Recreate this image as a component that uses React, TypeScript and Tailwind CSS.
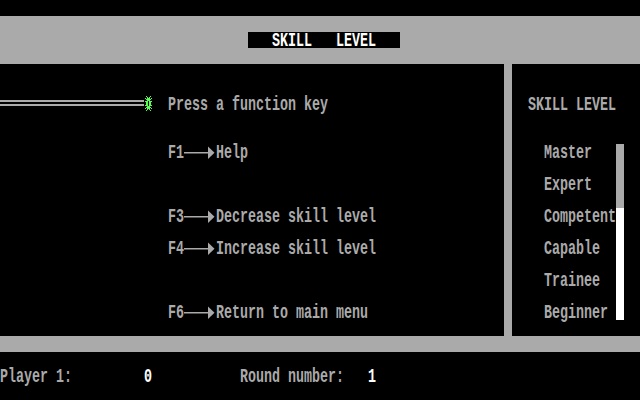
import React from "react";

const mono = "font-['Liberation_Mono',monospace] font-bold text-[13.333px] leading-4";

// Tall DOS-style glyphs: 8px cells stretched vertically to fill a 16px row.
function T({ children, className = "" }: { children: React.ReactNode; className?: string }) {
  return (
    <span className={`inline-block whitespace-pre origin-center scale-y-[1.5] translate-y-[1px] ${className}`}>
      {children}
    </span>
  );
}

function Row({ children, className = "" }: { children: React.ReactNode; className?: string }) {
  return <div className={`h-4 flex items-center ${mono} ${className}`}>{children}</div>;
}

function Arrow() {
  return (
    <svg width="32" height="16" viewBox="0 0 32 16" className="shrink-0">
      <rect x="0" y="8" width="26" height="1.5" fill="#aaaaaa" />
      <polygon points="24,2.5 30.5,8.75 24,15" fill="#aaaaaa" />
    </svg>
  );
}

function Bug() {
  // 7x15 pixel sprite
  const rows = [
    ".X...X.",
    "..X.X..",
    "X.XXX.X",
    ".XXXXX.",
    "..XXX..",
    "XXX.XXX",
    ".XX.XX.",
    ".XX.XX.",
    ".XX.XX.",
    "XXX.XXX",
    "..XXX..",
    ".XXXXX.",
    "X.XXX.X",
    "..X.X..",
    ".X...X.",
  ];
  return (
    <svg width="8" height="16" viewBox="0 0 8 16" className="shrink-0" shapeRendering="crispEdges">
      {rows.map((r, y) =>
        r.split("").map((c, x) =>
          c === "X" ? <rect key={`${x}-${y}`} x={x + 1} y={y} width="1" height="1" fill="#55ff55" /> : null
        )
      )}
    </svg>
  );
}

function KeyLine({ k, label }: { k: string; label: string }) {
  return (
    <Row className="text-[#aaaaaa]">
      <T>{k}</T>
      <Arrow />
      <T>{label}</T>
    </Row>
  );
}

const levels = ["Master", "Expert", "Competent", "Capable", "Trainee", "Beginner"];

export default function App() {
  return (
    <div className="w-[640px] h-[400px] bg-black flex flex-col overflow-hidden">
      <div className="h-4 bg-black" />
      <div className="h-12 bg-[#aaaaaa] flex items-center pl-[248px]">
        <div className={`w-[152px] h-4 bg-black flex items-center pl-6 text-white ${mono}`}>
          <T>{"SKILL   LEVEL"}</T>
        </div>
      </div>

      <div className="h-[272px] flex">
        {/* menu panel */}
        <div className="w-[504px] bg-black pt-8 flex flex-col">
          <Row className="text-[#aaaaaa]">
            <div className="w-[144px] h-4 flex flex-col justify-start pt-1 gap-[2px]">
              <div className="h-[2px] bg-[#aaaaaa]" />
              <div className="h-[2px] bg-[#aaaaaa]" />
            </div>
            <Bug />
            <div className="w-4" />
            <T>Press a function key</T>
          </Row>
          <div className="pl-[168px] flex flex-col">
            <div className="mt-8">
              <KeyLine k="F1" label="Help" />
            </div>
            <div className="mt-12">
              <KeyLine k="F3" label="Decrease skill level" />
            </div>
            <div className="mt-4">
              <KeyLine k="F4" label="Increase skill level" />
            </div>
            <div className="mt-12">
              <KeyLine k="F6" label="Return to main menu" />
            </div>
          </div>
        </div>

        <div className="w-2 bg-[#aaaaaa]" />

        {/* level panel */}
        <div className="flex-1 bg-black pt-8 pl-4 flex flex-col">
          <Row className="text-[#aaaaaa]">
            <T>SKILL LEVEL</T>
          </Row>
          <div className="mt-8 flex">
            <div className="w-[88px] pl-4 flex flex-col gap-4">
              {levels.map((l) => (
                <Row key={l} className="text-[#aaaaaa]">
                  <T>{l}</T>
                </Row>
              ))}
            </div>
            <div className="w-2 h-[176px] flex flex-col">
              <div className="h-16 bg-[#aaaaaa]" />
              <div className="flex-1 bg-white" />
            </div>
          </div>
        </div>
      </div>

      <div className="h-4 bg-[#aaaaaa]" />

      <div className="flex-1 bg-black pt-4">
        <Row className="text-[#aaaaaa]">
          <div className="w-[144px]">
            <T>Player 1:</T>
          </div>
          <div className="w-[96px] text-white">
            <T>0</T>
          </div>
          <div className="w-[128px]">
            <T>Round number:</T>
          </div>
          <div className="text-white">
            <T>1</T>
          </div>
        </Row>
      </div>
    </div>
  );
}
